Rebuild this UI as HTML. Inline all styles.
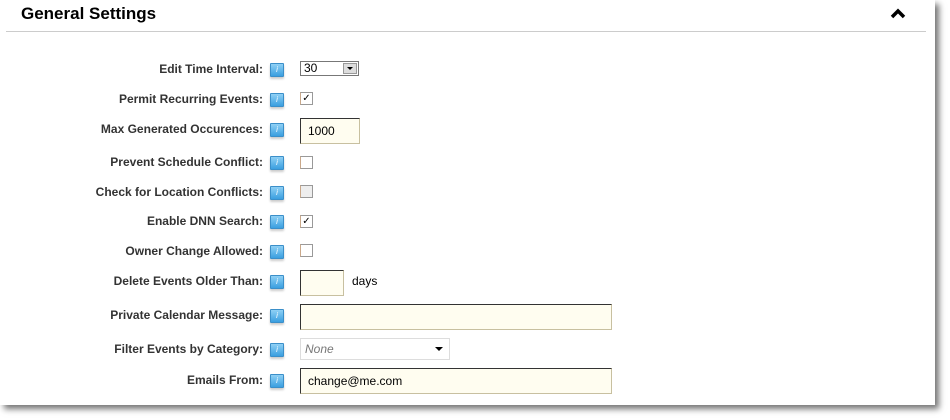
<!DOCTYPE html>
<html><head><style>
body{margin:0;width:950px;height:420px;background:#fff;position:relative;overflow:hidden;font-family:"Liberation Sans",Arial,sans-serif}
.panel{position:absolute;left:0;top:0;width:935px;height:405px;background:#fff;box-shadow:4px 4px 6px rgba(0,0,0,.55)}
.t{position:absolute;left:21px;top:4px;font-size:17px;font-weight:bold;color:#000}
.hr{position:absolute;left:6px;top:31px;width:920px;height:1px;background:#ccc}
.lbl{position:absolute;right:672px;font-size:12px;font-weight:bold;color:#333;white-space:nowrap}
.ic{position:absolute;left:270px;width:12px;height:12px;background:linear-gradient(#8fd0f5,#3a9fe0);border:1px solid #3b8fc9;border-radius:1px;box-shadow:0 2px 2px #ccc;color:#fff;font-size:8px;font-style:italic;text-align:center;line-height:12px}
.cb{position:absolute;left:300px;width:11px;height:11px;border:1px solid #999;border-left-color:#c9a88a;background:#fff;font-size:10px;line-height:11px;text-align:center;color:#000}
.tx{position:absolute;left:300px;background:#fffdf0;border:1px solid #333;border-right-color:#c8c0a0;border-bottom-color:#c8c0a0;box-sizing:border-box;font-size:12px;color:#000;padding-left:7px}
</style></head><body>
<div class="panel">
<div class="t">General Settings</div>
<svg style="position:absolute;left:890px;top:7px" width="16" height="12"><path d="M2 10 L8 4 L14 10" stroke="#000" stroke-width="3.5" fill="none"/></svg>
<div class="hr"></div>

<div class="lbl" style="top:62px">Edit Time Interval:</div><div class="ic" style="top:63px">i</div>
<div style="position:absolute;left:300px;top:61px;width:59px;height:15px;border:1px solid #777;box-sizing:border-box;font-size:12px;line-height:13px;padding-left:3px">30<div style="position:absolute;right:1px;top:1px;width:14px;height:11px;background:#ddd;border:1px solid #999;box-sizing:border-box"><div style="margin:3px auto 0;width:0;height:0;border-left:3px solid transparent;border-right:3px solid transparent;border-top:3px solid #000"></div></div></div>

<div class="lbl" style="top:92px">Permit Recurring Events:</div><div class="ic" style="top:93px">i</div>
<div class="cb" style="top:92px">✓</div>

<div class="lbl" style="top:122px">Max Generated Occurences:</div><div class="ic" style="top:123px">i</div>
<div class="tx" style="top:118px;width:60px;height:26px;line-height:24px">1000</div>

<div class="lbl" style="top:155px">Prevent Schedule Conflict:</div><div class="ic" style="top:156px">i</div>
<div class="cb" style="top:156px"></div>

<div class="lbl" style="top:185px">Check for Location Conflicts:</div><div class="ic" style="top:186px">i</div>
<div class="cb" style="top:185px;background:#eee"></div>

<div class="lbl" style="top:214px">Enable DNN Search:</div><div class="ic" style="top:215px">i</div>
<div class="cb" style="top:215px">✓</div>

<div class="lbl" style="top:244px">Owner Change Allowed:</div><div class="ic" style="top:245px">i</div>
<div class="cb" style="top:244px"></div>

<div class="lbl" style="top:274px">Delete Events Older Than:</div><div class="ic" style="top:275px">i</div>
<div class="tx" style="top:270px;width:44px;height:26px"></div>
<div style="position:absolute;left:352px;top:274px;font-size:12px;color:#000">days</div>

<div class="lbl" style="top:308px">Private Calendar Message:</div><div class="ic" style="top:309px">i</div>
<div class="tx" style="top:304px;width:312px;height:26px"></div>

<div class="lbl" style="top:342px">Filter Events by Category:</div><div class="ic" style="top:343px">i</div>
<div style="position:absolute;left:300px;top:338px;width:150px;height:22px;border:1px solid #ddd;box-sizing:border-box;font-size:12px;font-style:italic;color:#777;line-height:20px;padding-left:4px">None<div style="position:absolute;right:6px;top:8px;width:0;height:0;border-left:4px solid transparent;border-right:4px solid transparent;border-top:4px solid #000"></div></div>

<div class="lbl" style="top:373px">Emails From:</div><div class="ic" style="top:374px">i</div>
<div class="tx" style="top:368px;width:312px;height:26px;line-height:24px">change@me.com</div>
</div>
</body></html>
